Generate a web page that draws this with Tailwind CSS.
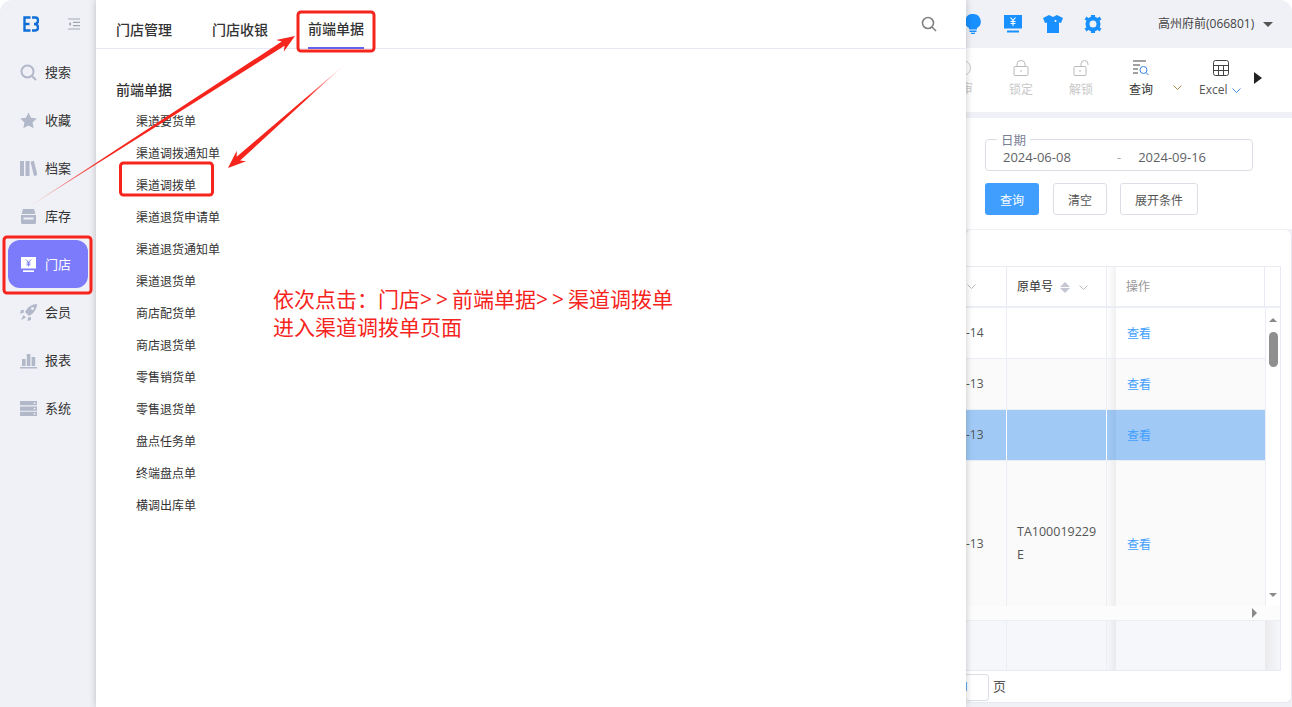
<!DOCTYPE html>
<html lang="zh-CN">
<head>
<meta charset="UTF-8">
<title>渠道调拨单</title>
<script src="https://cdn.jsdelivr.net/npm/@tailwindcss/browser@4"></script>
</head>
<body class="bg-white overflow-hidden font-['Open_Sans','Noto_Sans_CJK_SC',sans-serif]">
<div class="relative flex w-[1292px] h-[707px] overflow-hidden">

  <!-- 左侧导航 -->
  <aside class="w-[96px] shrink-0 bg-[#f0f1f6] rounded-tl-[12px] text-[13px] text-[#333]">
    <div class="flex items-center h-[48px] pl-[23px] gap-[29px]">
      <svg class="w-[16px] h-[16px]" viewBox="0 0 16 16" fill="none" stroke="#0f6fd6" stroke-width="2.4"><path d="M7.5 1.5H1.5V14.5H7.5M1.5 8H6.5"/><path d="M9 1.5H12.5Q15 1.5 15 4.5Q15 8 11 8Q15 8 15 11.5Q15 14.5 12.5 14.5H9"/></svg>
      <svg class="w-[12px] h-[12px]" viewBox="0 0 12 12" fill="none" stroke="#a5a9b5" stroke-width="1.2"><path d="M0 1H12M5 4.3H12M5 7.7H12M0 11H12"/><path d="M3 4L0.5 6L3 8Z" fill="#a5a9b5" stroke="none"/></svg>
    </div>
    <nav class="flex flex-col items-center gap-0">
      <a class="flex items-center w-[80px] h-[48px] pl-[12px] gap-[8px]">
        <svg class="w-[17px] h-[17px]" viewBox="0 0 17 17" fill="none" stroke="#b1b8c9" stroke-width="2"><circle cx="7.5" cy="7.5" r="6"/><path d="M12 12L16 16"/></svg><span class="mt-[2px]">搜索</span>
      </a>
      <a class="flex items-center w-[80px] h-[48px] pl-[12px] gap-[8px]">
        <svg class="w-[17px] h-[17px]" viewBox="0 0 17 17" fill="#b1b8c9"><path d="M8.5 0.5L11 5.8L16.8 6.5L12.5 10.5L13.7 16.3L8.5 13.4L3.3 16.3L4.5 10.5L0.2 6.5L6 5.8Z"/></svg><span class="mt-[2px]">收藏</span>
      </a>
      <a class="flex items-center w-[80px] h-[48px] pl-[12px] gap-[8px]">
        <svg class="w-[17px] h-[17px]" viewBox="0 0 17 17" fill="#b1b8c9"><rect x="0" y="1" width="4" height="15"/><rect x="5.5" y="1" width="4" height="15"/><path d="M10.5 1.8L13.8 0.8L17.5 15L14 16Z"/></svg><span class="mt-[2px]">档案</span>
      </a>
      <a class="flex items-center w-[80px] h-[48px] pl-[12px] gap-[8px]">
        <svg class="w-[17px] h-[17px]" viewBox="0 0 17 17" fill="#b1b8c9"><path d="M3 1H14L15.5 6H1.5Z"/><path d="M1 7H16V14.5Q16 16 14.5 16H2.5Q1 16 1 14.5ZM3.5 9.5V11.5H13.5V9.5Z" fill-rule="evenodd"/></svg><span class="mt-[2px]">库存</span>
      </a>
      <a class="flex items-center w-[80px] h-[48px] pl-[12px] gap-[8px] rounded-[12px] bg-[#7b7bfb] text-white">
        <svg class="w-[17px] h-[17px]" viewBox="0 0 17 17" fill="#fff"><path d="M1 1H16V12.5H1Z"/><rect x="3" y="14.3" width="11" height="1.7"/><path d="M6 3.5L8.5 6.3L11 3.5M8.5 6.3V10.5M6.5 7H10.5M6.5 8.8H10.5" fill="none" stroke="#7b7bfb" stroke-width="1"/></svg><span class="mt-[2px]">门店</span>
      </a>
      <a class="flex items-center w-[80px] h-[48px] pl-[12px] gap-[8px]">
        <svg class="w-[17px] h-[17px]" viewBox="0 0 17 17" fill="#b1b8c9"><path d="M17 0C11 0.5 7.5 3.5 5 8L9 12C13.5 9.5 16.5 6 17 0ZM11 4.5A1.5 1.5 0 1 1 11 4.6Z" fill-rule="evenodd"/><path d="M4 6H1L0 9.5L3.5 9ZM11 13V16L7.5 17L8 13.5ZM3.5 11L6 13.5L1 16Z"/></svg><span class="mt-[2px]">会员</span>
      </a>
      <a class="flex items-center w-[80px] h-[48px] pl-[12px] gap-[8px]">
        <svg class="w-[17px] h-[17px]" viewBox="0 0 17 17" fill="#b1b8c9"><rect x="2" y="7" width="3.6" height="7"/><rect x="6.8" y="2" width="3.6" height="12"/><rect x="11.6" y="5" width="3.6" height="9"/><rect x="0" y="15" width="17" height="1.5"/></svg><span class="mt-[2px]">报表</span>
      </a>
      <a class="flex items-center w-[80px] h-[48px] pl-[12px] gap-[8px]">
        <svg class="w-[17px] h-[17px]" viewBox="0 0 17 17" fill="#b1b8c9"><path d="M0 1H17V5.3H0ZM0 6.4H17V10.7H0ZM0 11.8H17V16H0Z"/><g fill="#f0f1f6"><circle cx="14.5" cy="3.2" r=".9"/><circle cx="14.5" cy="8.6" r=".9"/><circle cx="14.5" cy="13.9" r=".9"/></g></svg><span class="mt-[2px]">系统</span>
      </a>
    </nav>
  </aside>

  <!-- 门店菜单面板 -->
  <section class="relative z-10 w-[870px] shrink-0 bg-white shadow-[0_0_7px_rgba(0,0,0,0.22)]">
    <header class="flex items-center h-[49px] pl-[20px] pr-[29px] border-b border-[#e8e8f6] text-[14px] font-medium text-[#333]">
      <a class="flex items-center h-[48px] w-[56px] mr-[40px] pt-[10px]">门店管理</a>
      <a class="flex items-center h-[48px] w-[56px] mr-[40px] pt-[10px]">门店收银</a>
      <a class="flex items-center h-[49px] w-[56px] border-b-2 border-[#6464e8] pt-[10px]">前端单据</a>
      <svg class="w-[16px] h-[16px] ml-auto" viewBox="0 0 16 16" fill="none" stroke="#808080" stroke-width="1.6"><circle cx="7" cy="7" r="5.5"/><path d="M11 11L15 15"/></svg>
    </header>
    <div class="pl-[20px] pt-[30px]">
      <h3 class="text-[14px] leading-[22px] font-medium text-[#333]">前端单据</h3>
      <ul class="mt-[5px] pl-[20px] text-[12px] text-[#333]">
        <li class="flex items-center h-[32px]">渠道要货单</li>
        <li class="flex items-center h-[32px]">渠道调拨通知单</li>
        <li class="flex items-center h-[32px]">渠道调拨单</li>
        <li class="flex items-center h-[32px]">渠道退货申请单</li>
        <li class="flex items-center h-[32px]">渠道退货通知单</li>
        <li class="flex items-center h-[32px]">渠道退货单</li>
        <li class="flex items-center h-[32px]">商店配货单</li>
        <li class="flex items-center h-[32px]">商店退货单</li>
        <li class="flex items-center h-[32px]">零售销货单</li>
        <li class="flex items-center h-[32px]">零售退货单</li>
        <li class="flex items-center h-[32px]">盘点任务单</li>
        <li class="flex items-center h-[32px]">终端盘点单</li>
        <li class="flex items-center h-[32px]">横调出库单</li>
      </ul>
    </div>
  </section>

  <!-- 被遮挡的主内容 -->
  <main class="flex-1 min-w-0 flex flex-col bg-[#f0f1f6] rounded-tr-[12px] overflow-hidden">
    <div class="flex items-center h-[48px] shrink-0 text-[#1890ff]">
      <svg class="w-[18px] h-[20px] ml-[-2px]" viewBox="0 0 18 20" fill="#1890ff"><path d="M9 0A7.5 7.5 0 0 1 13 14V15.5H5V14A7.5 7.5 0 0 1 9 0Z"/><rect x="5.5" y="16.5" width="7" height="1.5"/><rect x="7" y="18.7" width="4" height="1.3"/></svg>
      <svg class="w-[18px] h-[18px] ml-[22px]" viewBox="0 0 18 18" fill="#1890ff"><path d="M0 0H18V13.5H0Z"/><rect x="3" y="15.5" width="12" height="2"/><path d="M6.5 2.5L9 5.5L11.5 2.5M9 5.5V11M6.5 6.5H11.5M6.5 8.5H11.5" fill="none" stroke="#fff" stroke-width="1.1"/></svg>
      <svg class="w-[20px] h-[18px] ml-[21px]" viewBox="0 0 20 18" fill="#1890ff"><path d="M6 0L10 2L14 0L20 3L18 8L16 7.5V18H4V7.5L2 8L0 3Z"/><circle cx="12.5" cy="6" r="1" fill="#fff"/></svg>
      <svg class="w-[18px] h-[18px] ml-[21px]" viewBox="0 0 18 18"><circle cx="9" cy="9" r="5.5" fill="none" stroke="#1890ff" stroke-width="4"/><path d="M7 0H11V3H7ZM7 15H11V18H7ZM0.5 4.5L2.5 1.5L5 3.5L3.5 6ZM13 3.5L15.5 1.5L17.5 4.5L14.5 6ZM0.5 13.5L3.5 12L5 14.5L2.5 16.5ZM13 14.5L14.5 12L17.5 13.5L15.5 16.5Z" fill="#1890ff"/></svg>
      <span class="ml-[56px] text-[12px] text-[#444]">高州府前(066801)</span>
      <span class="ml-[9px] w-0 h-0 border-x-[5px] border-x-transparent border-t-[5px] border-t-[#555]"></span>
    </div>

    <div class="flex h-[64px] shrink-0 bg-white text-[12px]">
      <div class="relative w-[35px] shrink-0 overflow-hidden text-[#ccc]">
        <span class="absolute left-[-5px] top-[32px]">审</span>
        <span class="absolute left-[-11px] top-[12px] w-[16px] h-[16px] rounded-full border border-[#ccc]"></span>
      </div>
      <div class="flex flex-col items-center w-[40px] shrink-0 pt-[12px] text-[#c8c8c8]">
        <svg class="w-[16px] h-[16px]" viewBox="0 0 16 16" fill="none" stroke="#bbb"><rect x="1" y="6.5" width="14" height="9" rx="1"/><path d="M4 6.5V4A4 3.5 0 0 1 12 4V6.5M8 10V12"/></svg>
        <span class="mt-[4px] leading-[20px]">锁定</span>
      </div>
      <div class="flex flex-col items-center w-[40px] shrink-0 ml-[20px] pt-[12px] text-[#c8c8c8]">
        <svg class="w-[16px] h-[16px]" viewBox="0 0 16 16" fill="none" stroke="#bbb"><rect x="1" y="6.5" width="12" height="9" rx="1"/><path d="M8 6.5V4A3.5 3.5 0 0 1 15 4V5M7 10V12"/></svg>
        <span class="mt-[4px] leading-[20px]">解锁</span>
      </div>
      <div class="flex flex-col items-center w-[40px] shrink-0 ml-[20px] pt-[12px] text-[#333]">
        <svg class="w-[16px] h-[16px]" viewBox="0 0 16 16" fill="none" stroke="#444"><path d="M0 1H13M0 5H7M0 9H5M0 13H5"/><circle cx="10.5" cy="10" r="3.5" stroke="#3a86e8"/><path d="M13 12.5L15.5 15" stroke="#3a86e8"/></svg>
        <span class="mt-[4px] leading-[20px]">查询</span>
      </div>
      <svg class="w-[9px] h-[5px] mt-[37px] ml-[12px]" viewBox="0 0 9 5" fill="none" stroke="#b08a55"><path d="M0.5 0.5L4.5 4.5L8.5 0.5"/></svg>
      <div class="flex flex-col items-start w-[45px] shrink-0 ml-[17px] pt-[12px] text-[#555]">
        <svg class="w-[16px] h-[16px] ml-[14px]" viewBox="0 0 16 16" fill="none" stroke="#444"><rect x="0.5" y="0.5" width="15" height="15" rx="2"/><path d="M0.5 5.5H15.5M0.5 10.5H15.5M5.5 5.5V15.5M10.5 5.5V15.5"/></svg>
        <span class="mt-[4px] leading-[20px] flex items-center gap-[5px]">Excel<svg class="w-[9px] h-[5px]" viewBox="0 0 9 5" fill="none" stroke="#4a90e2"><path d="M0.5 0.5L4.5 4.5L8.5 0.5"/></svg></span>
      </div>
      <span class="ml-[10px] mt-[24px] w-0 h-0 border-y-[6px] border-y-transparent border-l-[8px] border-l-[#222]"></span>
    </div>

    <div class="h-[6px] shrink-0"></div>

    <!-- 查询条件 -->
    <div class="h-[111px] shrink-0 bg-white pl-[19px] pt-[21px]">
      <div class="relative flex items-center w-[268px] h-[32px] border border-[#dcdee6] rounded-[4px] pl-[17px] pt-[6px] text-[13px] text-[#606266]">
        <span class="absolute left-[11px] top-[-7px] px-[4px] bg-white text-[12.5px] leading-[16px] text-[#7a8094]">日期</span>
        <span class="w-[72px]">2024-06-08</span>
        <span class="ml-[42px] text-[#aaa]">-</span>
        <span class="ml-[17px] w-[72px]">2024-09-16</span>
      </div>
      <div class="flex items-center mt-[12px] text-[12px]">
        <button class="w-[54px] h-[32px] pt-[3px] rounded-[3px] bg-[#409eff] text-white">查询</button>
        <button class="w-[54px] h-[32px] pt-[3px] ml-[14px] rounded-[3px] border border-[#dcdee6] text-[#555]">清空</button>
        <button class="w-[78px] h-[32px] pt-[3px] ml-[13px] rounded-[3px] border border-[#dcdee6] text-[#555]">展开条件</button>
      </div>
    </div>

    <div class="h-[1px] shrink-0"></div>

    <!-- 表格卡片 -->
    <div class="flex-1 flex flex-col mb-[4px] bg-white rounded-[6px] border-r border-b border-[#e6e8ef] overflow-hidden text-[12px] text-[#555]">
      <div class="h-[36px] shrink-0"></div>
      <div class="flex flex-col w-[315px] h-[405px] shrink-0 border-y border-r border-[#e8eaf4] overflow-hidden">
        <!-- 表头 -->
        <div class="flex h-[41px] shrink-0 border-b-2 border-[#eceef6]">
          <div class="flex items-center w-[41px] shrink-0 border-r border-[#e8eaf4] pl-[1px]"><svg class="w-[9px] h-[5px]" viewBox="0 0 9 5" fill="none" stroke="#bbb"><path d="M0.5 0.5L4.5 4.5L8.5 0.5"/></svg></div>
          <div class="flex items-center w-[100px] shrink-0 border-r border-[#e8eaf4] pl-[10px] pt-[1px] text-[#333]">原单号
            <span class="ml-[7px] flex flex-col gap-[1px]"><span class="w-0 h-0 border-x-[5px] border-x-transparent border-b-[5px] border-b-[#c5c8d2]"></span><span class="w-0 h-0 border-x-[5px] border-x-transparent border-t-[5px] border-t-[#c5c8d2]"></span></span>
            <svg class="w-[9px] h-[5px] ml-[9px]" viewBox="0 0 9 5" fill="none" stroke="#bbb"><path d="M0.5 0.5L4.5 4.5L8.5 0.5"/></svg>
          </div>
          <div class="w-[9px] shrink-0 bg-gradient-to-r from-white to-[#f2f2f4]"></div>
          <div class="flex items-center w-[149px] shrink-0 pl-[10px] pt-[1px] border-r border-[#e8eaf4] text-[#999]">操作</div>
        </div>
        <!-- 表体 -->
        <div class="relative h-[298px] shrink-0 overflow-hidden">
          <div class="flex h-[51px] border-b border-[#eceef6] bg-white">
            <div class="flex items-center w-[41px] shrink-0 border-r border-[#eceef6]">-14</div>
            <div class="w-[100px] shrink-0 border-r border-[#eceef6]"></div>
            <div class="w-[9px] shrink-0 bg-gradient-to-r from-white to-[#f0f0f2]"></div>
            <div class="flex items-center w-[149px] shrink-0 pl-[11px] pt-[2px] text-[#409eff]">查看</div>
          </div>
          <div class="flex h-[51px] border-b border-[#eceef6] bg-[#fafafa]">
            <div class="flex items-center w-[41px] shrink-0 border-r border-[#eceef6]">-13</div>
            <div class="w-[100px] shrink-0 border-r border-[#eceef6]"></div>
            <div class="w-[9px] shrink-0 bg-gradient-to-r from-[#fafafa] to-[#ededef]"></div>
            <div class="flex items-center w-[149px] shrink-0 pl-[11px] pt-[2px] text-[#409eff]">查看</div>
          </div>
          <div class="flex h-[51px] border-b border-[#eceef6] bg-[#a0c9f5]">
            <div class="flex items-center w-[41px] shrink-0 border-r border-white">-13</div>
            <div class="w-[100px] shrink-0 border-r border-white"></div>
            <div class="w-[9px] shrink-0 bg-gradient-to-r from-[#a0c9f5] to-[#98bfe9]"></div>
            <div class="flex items-center w-[149px] shrink-0 pl-[11px] pt-[2px] text-[#409eff]">查看</div>
          </div>
          <div class="flex h-[145px] bg-[#fafafa]">
            <div class="flex items-center w-[41px] shrink-0 border-r border-[#eceef6] pt-[21px]">-13</div>
            <div class="flex items-center w-[100px] shrink-0 border-r border-[#eceef6] pl-[10px] pt-[19px] text-[12.5px] leading-[23px]"><span>TA100019229<br>E</span></div>
            <div class="w-[9px] shrink-0 bg-gradient-to-r from-[#fafafa] to-[#ededef]"></div>
            <div class="flex items-center w-[149px] shrink-0 pl-[11px] pt-[23px] text-[#409eff]">查看</div>
          </div>
          <!-- 竖向滚动条 -->
          <div class="absolute right-0 top-0 bottom-0 w-[15px] flex flex-col items-center bg-white border-l border-[#eceef6]">
            <span class="mt-[10px] w-0 h-0 border-x-[4px] border-x-transparent border-b-[4px] border-b-[#8a8a8a]"></span>
            <span class="mt-[10px] w-[9px] h-[35px] rounded-full bg-[#8f8f8f]"></span>
            <span class="mt-auto mb-[9px] w-0 h-0 border-x-[4px] border-x-transparent border-t-[4px] border-t-[#8a8a8a]"></span>
          </div>
        </div>
        <!-- 横向滚动条 -->
        <div class="flex items-center justify-end h-[14px] shrink-0 bg-[#fcfcfc] pr-[23px]">
          <span class="w-0 h-0 border-y-[5px] border-y-transparent border-l-[5px] border-l-[#8a8a8a]"></span>
        </div>
        <!-- 合计行 -->
        <div class="flex flex-1 border-t border-[#eceef6] bg-[#f6f7fb]">
          <div class="w-[41px] shrink-0 border-r border-[#eceef6]"></div>
          <div class="w-[100px] shrink-0 border-r border-[#eceef6]"></div>
          <div class="w-[9px] shrink-0 bg-gradient-to-r from-[#f6f7fb] to-[#eaeaec]"></div>
          <div class="w-[149px] shrink-0"></div>
          <div class="flex-1 bg-gradient-to-r from-[#eaeaec] to-[#f6f7fb]"></div>
        </div>
      </div>
      <!-- 分页 -->
      <div class="flex items-center h-[32px] shrink-0 text-[13px]">
        <div class="flex items-center justify-start w-[23px] h-[27px] border border-l-0 border-[#dcdee6] rounded-r-[4px] text-[#4a7fd0]"><span class="ml-[-4px]">1</span></div>
        <span class="ml-[4px] text-[#555]">页</span>
      </div>
    </div>
  </main>

  <!-- 红色标注 -->
  <svg class="absolute inset-0 z-20 pointer-events-none" width="1292" height="707" viewBox="0 0 1292 707" fill="none">
    <defs>
      <linearGradient id="arrowA" gradientUnits="userSpaceOnUse" x1="30" y1="206" x2="110" y2="154"><stop offset="0" stop-color="#f5241c" stop-opacity=".35"/><stop offset="1" stop-color="#f5241c"/></linearGradient>
      <linearGradient id="arrowB" gradientUnits="userSpaceOnUse" x1="343" y1="66" x2="305" y2="100"><stop offset="0" stop-color="#f5241c" stop-opacity=".15"/><stop offset="1" stop-color="#f5241c"/></linearGradient>
    </defs>
    <rect x="4" y="237" width="87" height="56" rx="3" stroke="#f5241c" stroke-width="3"/>
    <rect x="298" y="12" width="76" height="39" rx="3" stroke="#f5241c" stroke-width="3"/>
    <rect x="120.5" y="163" width="92" height="32" rx="3" stroke="#f5241c" stroke-width="3"/>
    <polygon points="30,206 281.8,41.5 276.1,39.9 295,36 283.7,51.7 284.6,45.7" fill="url(#arrowA)"/>
    <polygon points="343,66 240.1,160.5 246.1,161.2 228,168 236.7,150.8 236.7,156.7" fill="url(#arrowB)"/>
  </svg>
  <div class="absolute z-20 left-[273px] top-[285px] text-[21px] leading-[28px] text-[#f5241c]">
    <p>依次点击&#xFF1A;门店<span class="tracking-[4px]">&gt;&gt;</span>前端单据<span class="tracking-[4px]">&gt;&gt;</span>渠道调拨单</p>
    <p>进入渠道调拨单页面</p>
  </div>
</div>
</body>
</html>
